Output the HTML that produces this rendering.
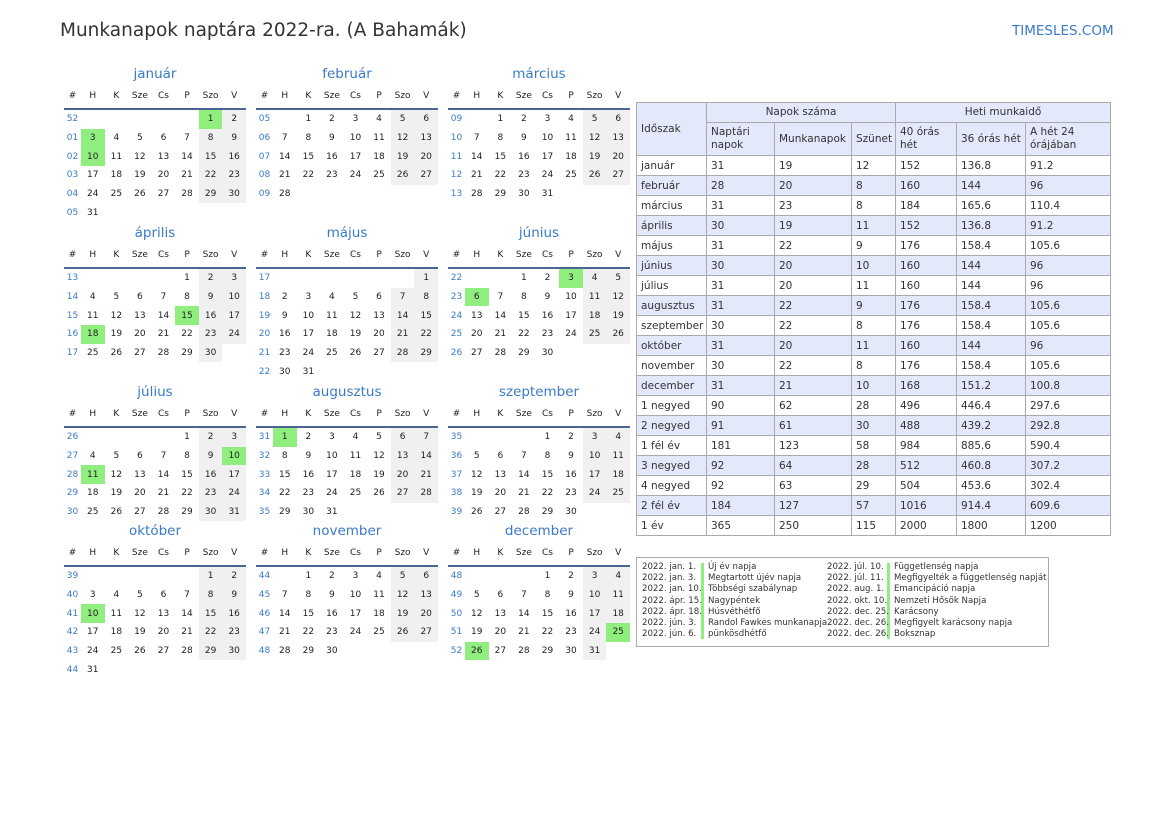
<!DOCTYPE html>
<html><head><meta charset="utf-8"><style>
body{margin:0;width:1169px;height:827px;background:#fff;font-family:"DejaVu Sans","Liberation Sans",sans-serif;position:relative;overflow:hidden;color:#222}
.title{position:absolute;left:60px;top:20px;font-size:18.5px;color:#333}
.site{position:absolute;left:1012px;top:23px;font-size:13.5px;color:#3a7bc8}
.m{position:absolute;width:182px}
.m h3{margin:0;height:20px;line-height:20px;text-align:center;font-weight:normal;font-size:13.5px;color:#3a7bc8}
.m table{border-collapse:collapse;table-layout:fixed;width:182px;font-size:9px}
.m td{height:18.7px;padding:0;text-align:center;vertical-align:middle}
.m tr.h td{height:24px;border-bottom:2.5px solid #4a6592}
.m td:first-child{width:17px;color:#3a7bc8}
.m tr.h td:first-child{color:#222}
.w{background:#f0f0f0}.g{background:#90ee7e}
.s{position:absolute;left:636px;top:102px;width:474px;table-layout:fixed;border-collapse:collapse;font-size:10.5px;color:#333}
.s td{border:1px solid #aaa;height:19px;padding:0 4px;vertical-align:middle;overflow:hidden;white-space:nowrap}
.s tr.a td{background:#e4e8fb}
.s .hd td{background:#e4e8fb;white-space:normal;line-height:13px}
.hol{position:absolute;left:636px;top:557px;width:411px;height:88px;border:1.5px solid #aaa;font-size:8.6px;color:#333}
.hol div{position:absolute;line-height:11.2px;white-space:nowrap}
.bar{position:absolute;width:3px;background:#90ee7e}
</style></head><body>
<div class="title">Munkanapok naptára 2022-ra. (A Bahamák)</div>
<div class="site">TIMESLES.COM</div>

<div class="m" style="left:64px;top:64px"><h3>január</h3><table>
<tr class="h"><td>#</td><td>H</td><td>K</td><td>Sze</td><td>Cs</td><td>P</td><td>Szo</td><td>V</td></tr>
<tr><td>52</td><td></td><td></td><td></td><td></td><td></td><td class="g">1</td><td class="w">2</td></tr>
<tr><td>01</td><td class="g">3</td><td>4</td><td>5</td><td>6</td><td>7</td><td class="w">8</td><td class="w">9</td></tr>
<tr><td>02</td><td class="g">10</td><td>11</td><td>12</td><td>13</td><td>14</td><td class="w">15</td><td class="w">16</td></tr>
<tr><td>03</td><td>17</td><td>18</td><td>19</td><td>20</td><td>21</td><td class="w">22</td><td class="w">23</td></tr>
<tr><td>04</td><td>24</td><td>25</td><td>26</td><td>27</td><td>28</td><td class="w">29</td><td class="w">30</td></tr>
<tr><td>05</td><td>31</td><td></td><td></td><td></td><td></td><td></td><td></td></tr></table></div>

<div class="m" style="left:256px;top:64px"><h3>február</h3><table>
<tr class="h"><td>#</td><td>H</td><td>K</td><td>Sze</td><td>Cs</td><td>P</td><td>Szo</td><td>V</td></tr>
<tr><td>05</td><td></td><td>1</td><td>2</td><td>3</td><td>4</td><td class="w">5</td><td class="w">6</td></tr>
<tr><td>06</td><td>7</td><td>8</td><td>9</td><td>10</td><td>11</td><td class="w">12</td><td class="w">13</td></tr>
<tr><td>07</td><td>14</td><td>15</td><td>16</td><td>17</td><td>18</td><td class="w">19</td><td class="w">20</td></tr>
<tr><td>08</td><td>21</td><td>22</td><td>23</td><td>24</td><td>25</td><td class="w">26</td><td class="w">27</td></tr>
<tr><td>09</td><td>28</td><td></td><td></td><td></td><td></td><td></td><td></td></tr></table></div>

<div class="m" style="left:448px;top:64px"><h3>március</h3><table>
<tr class="h"><td>#</td><td>H</td><td>K</td><td>Sze</td><td>Cs</td><td>P</td><td>Szo</td><td>V</td></tr>
<tr><td>09</td><td></td><td>1</td><td>2</td><td>3</td><td>4</td><td class="w">5</td><td class="w">6</td></tr>
<tr><td>10</td><td>7</td><td>8</td><td>9</td><td>10</td><td>11</td><td class="w">12</td><td class="w">13</td></tr>
<tr><td>11</td><td>14</td><td>15</td><td>16</td><td>17</td><td>18</td><td class="w">19</td><td class="w">20</td></tr>
<tr><td>12</td><td>21</td><td>22</td><td>23</td><td>24</td><td>25</td><td class="w">26</td><td class="w">27</td></tr>
<tr><td>13</td><td>28</td><td>29</td><td>30</td><td>31</td><td></td><td></td><td></td></tr></table></div>

<div class="m" style="left:64px;top:223px"><h3>április</h3><table>
<tr class="h"><td>#</td><td>H</td><td>K</td><td>Sze</td><td>Cs</td><td>P</td><td>Szo</td><td>V</td></tr>
<tr><td>13</td><td></td><td></td><td></td><td></td><td>1</td><td class="w">2</td><td class="w">3</td></tr>
<tr><td>14</td><td>4</td><td>5</td><td>6</td><td>7</td><td>8</td><td class="w">9</td><td class="w">10</td></tr>
<tr><td>15</td><td>11</td><td>12</td><td>13</td><td>14</td><td class="g">15</td><td class="w">16</td><td class="w">17</td></tr>
<tr><td>16</td><td class="g">18</td><td>19</td><td>20</td><td>21</td><td>22</td><td class="w">23</td><td class="w">24</td></tr>
<tr><td>17</td><td>25</td><td>26</td><td>27</td><td>28</td><td>29</td><td class="w">30</td><td></td></tr></table></div>

<div class="m" style="left:256px;top:223px"><h3>május</h3><table>
<tr class="h"><td>#</td><td>H</td><td>K</td><td>Sze</td><td>Cs</td><td>P</td><td>Szo</td><td>V</td></tr>
<tr><td>17</td><td></td><td></td><td></td><td></td><td></td><td></td><td class="w">1</td></tr>
<tr><td>18</td><td>2</td><td>3</td><td>4</td><td>5</td><td>6</td><td class="w">7</td><td class="w">8</td></tr>
<tr><td>19</td><td>9</td><td>10</td><td>11</td><td>12</td><td>13</td><td class="w">14</td><td class="w">15</td></tr>
<tr><td>20</td><td>16</td><td>17</td><td>18</td><td>19</td><td>20</td><td class="w">21</td><td class="w">22</td></tr>
<tr><td>21</td><td>23</td><td>24</td><td>25</td><td>26</td><td>27</td><td class="w">28</td><td class="w">29</td></tr>
<tr><td>22</td><td>30</td><td>31</td><td></td><td></td><td></td><td></td><td></td></tr></table></div>

<div class="m" style="left:448px;top:223px"><h3>június</h3><table>
<tr class="h"><td>#</td><td>H</td><td>K</td><td>Sze</td><td>Cs</td><td>P</td><td>Szo</td><td>V</td></tr>
<tr><td>22</td><td></td><td></td><td>1</td><td>2</td><td class="g">3</td><td class="w">4</td><td class="w">5</td></tr>
<tr><td>23</td><td class="g">6</td><td>7</td><td>8</td><td>9</td><td>10</td><td class="w">11</td><td class="w">12</td></tr>
<tr><td>24</td><td>13</td><td>14</td><td>15</td><td>16</td><td>17</td><td class="w">18</td><td class="w">19</td></tr>
<tr><td>25</td><td>20</td><td>21</td><td>22</td><td>23</td><td>24</td><td class="w">25</td><td class="w">26</td></tr>
<tr><td>26</td><td>27</td><td>28</td><td>29</td><td>30</td><td></td><td></td><td></td></tr></table></div>

<div class="m" style="left:64px;top:382px"><h3>július</h3><table>
<tr class="h"><td>#</td><td>H</td><td>K</td><td>Sze</td><td>Cs</td><td>P</td><td>Szo</td><td>V</td></tr>
<tr><td>26</td><td></td><td></td><td></td><td></td><td>1</td><td class="w">2</td><td class="w">3</td></tr>
<tr><td>27</td><td>4</td><td>5</td><td>6</td><td>7</td><td>8</td><td class="w">9</td><td class="g">10</td></tr>
<tr><td>28</td><td class="g">11</td><td>12</td><td>13</td><td>14</td><td>15</td><td class="w">16</td><td class="w">17</td></tr>
<tr><td>29</td><td>18</td><td>19</td><td>20</td><td>21</td><td>22</td><td class="w">23</td><td class="w">24</td></tr>
<tr><td>30</td><td>25</td><td>26</td><td>27</td><td>28</td><td>29</td><td class="w">30</td><td class="w">31</td></tr></table></div>

<div class="m" style="left:256px;top:382px"><h3>augusztus</h3><table>
<tr class="h"><td>#</td><td>H</td><td>K</td><td>Sze</td><td>Cs</td><td>P</td><td>Szo</td><td>V</td></tr>
<tr><td>31</td><td class="g">1</td><td>2</td><td>3</td><td>4</td><td>5</td><td class="w">6</td><td class="w">7</td></tr>
<tr><td>32</td><td>8</td><td>9</td><td>10</td><td>11</td><td>12</td><td class="w">13</td><td class="w">14</td></tr>
<tr><td>33</td><td>15</td><td>16</td><td>17</td><td>18</td><td>19</td><td class="w">20</td><td class="w">21</td></tr>
<tr><td>34</td><td>22</td><td>23</td><td>24</td><td>25</td><td>26</td><td class="w">27</td><td class="w">28</td></tr>
<tr><td>35</td><td>29</td><td>30</td><td>31</td><td></td><td></td><td></td><td></td></tr></table></div>

<div class="m" style="left:448px;top:382px"><h3>szeptember</h3><table>
<tr class="h"><td>#</td><td>H</td><td>K</td><td>Sze</td><td>Cs</td><td>P</td><td>Szo</td><td>V</td></tr>
<tr><td>35</td><td></td><td></td><td></td><td>1</td><td>2</td><td class="w">3</td><td class="w">4</td></tr>
<tr><td>36</td><td>5</td><td>6</td><td>7</td><td>8</td><td>9</td><td class="w">10</td><td class="w">11</td></tr>
<tr><td>37</td><td>12</td><td>13</td><td>14</td><td>15</td><td>16</td><td class="w">17</td><td class="w">18</td></tr>
<tr><td>38</td><td>19</td><td>20</td><td>21</td><td>22</td><td>23</td><td class="w">24</td><td class="w">25</td></tr>
<tr><td>39</td><td>26</td><td>27</td><td>28</td><td>29</td><td>30</td><td></td><td></td></tr></table></div>

<div class="m" style="left:64px;top:521px"><h3>október</h3><table>
<tr class="h"><td>#</td><td>H</td><td>K</td><td>Sze</td><td>Cs</td><td>P</td><td>Szo</td><td>V</td></tr>
<tr><td>39</td><td></td><td></td><td></td><td></td><td></td><td class="w">1</td><td class="w">2</td></tr>
<tr><td>40</td><td>3</td><td>4</td><td>5</td><td>6</td><td>7</td><td class="w">8</td><td class="w">9</td></tr>
<tr><td>41</td><td class="g">10</td><td>11</td><td>12</td><td>13</td><td>14</td><td class="w">15</td><td class="w">16</td></tr>
<tr><td>42</td><td>17</td><td>18</td><td>19</td><td>20</td><td>21</td><td class="w">22</td><td class="w">23</td></tr>
<tr><td>43</td><td>24</td><td>25</td><td>26</td><td>27</td><td>28</td><td class="w">29</td><td class="w">30</td></tr>
<tr><td>44</td><td>31</td><td></td><td></td><td></td><td></td><td></td><td></td></tr></table></div>

<div class="m" style="left:256px;top:521px"><h3>november</h3><table>
<tr class="h"><td>#</td><td>H</td><td>K</td><td>Sze</td><td>Cs</td><td>P</td><td>Szo</td><td>V</td></tr>
<tr><td>44</td><td></td><td>1</td><td>2</td><td>3</td><td>4</td><td class="w">5</td><td class="w">6</td></tr>
<tr><td>45</td><td>7</td><td>8</td><td>9</td><td>10</td><td>11</td><td class="w">12</td><td class="w">13</td></tr>
<tr><td>46</td><td>14</td><td>15</td><td>16</td><td>17</td><td>18</td><td class="w">19</td><td class="w">20</td></tr>
<tr><td>47</td><td>21</td><td>22</td><td>23</td><td>24</td><td>25</td><td class="w">26</td><td class="w">27</td></tr>
<tr><td>48</td><td>28</td><td>29</td><td>30</td><td></td><td></td><td></td><td></td></tr></table></div>

<div class="m" style="left:448px;top:521px"><h3>december</h3><table>
<tr class="h"><td>#</td><td>H</td><td>K</td><td>Sze</td><td>Cs</td><td>P</td><td>Szo</td><td>V</td></tr>
<tr><td>48</td><td></td><td></td><td></td><td>1</td><td>2</td><td class="w">3</td><td class="w">4</td></tr>
<tr><td>49</td><td>5</td><td>6</td><td>7</td><td>8</td><td>9</td><td class="w">10</td><td class="w">11</td></tr>
<tr><td>50</td><td>12</td><td>13</td><td>14</td><td>15</td><td>16</td><td class="w">17</td><td class="w">18</td></tr>
<tr><td>51</td><td>19</td><td>20</td><td>21</td><td>22</td><td>23</td><td class="w">24</td><td class="g">25</td></tr>
<tr><td>52</td><td class="g">26</td><td>27</td><td>28</td><td>29</td><td>30</td><td class="w">31</td><td></td></tr></table></div>

<table class="s">
<colgroup><col style="width:70px"><col style="width:68px"><col style="width:77px"><col style="width:44px"><col style="width:61px"><col style="width:69px"><col style="width:85px"></colgroup>
<tr class="hd"><td rowspan="2">Időszak</td><td colspan="3" style="text-align:center">Napok száma</td><td colspan="3" style="text-align:center">Heti munkaidő</td></tr>
<tr class="hd" style="height:33px"><td>Naptári<br>napok</td><td>Munkanapok</td><td>Szünet</td><td>40 órás<br>hét</td><td style="white-space:nowrap">36 órás hét</td><td>A hét 24<br>órájában</td></tr>
<tr><td>január</td><td>31</td><td>19</td><td>12</td><td>152</td><td>136.8</td><td>91.2</td></tr>
<tr class="a"><td>február</td><td>28</td><td>20</td><td>8</td><td>160</td><td>144</td><td>96</td></tr>
<tr><td>március</td><td>31</td><td>23</td><td>8</td><td>184</td><td>165.6</td><td>110.4</td></tr>
<tr class="a"><td>április</td><td>30</td><td>19</td><td>11</td><td>152</td><td>136.8</td><td>91.2</td></tr>
<tr><td>május</td><td>31</td><td>22</td><td>9</td><td>176</td><td>158.4</td><td>105.6</td></tr>
<tr class="a"><td>június</td><td>30</td><td>20</td><td>10</td><td>160</td><td>144</td><td>96</td></tr>
<tr><td>július</td><td>31</td><td>20</td><td>11</td><td>160</td><td>144</td><td>96</td></tr>
<tr class="a"><td>augusztus</td><td>31</td><td>22</td><td>9</td><td>176</td><td>158.4</td><td>105.6</td></tr>
<tr><td>szeptember</td><td>30</td><td>22</td><td>8</td><td>176</td><td>158.4</td><td>105.6</td></tr>
<tr class="a"><td>október</td><td>31</td><td>20</td><td>11</td><td>160</td><td>144</td><td>96</td></tr>
<tr><td>november</td><td>30</td><td>22</td><td>8</td><td>176</td><td>158.4</td><td>105.6</td></tr>
<tr class="a"><td>december</td><td>31</td><td>21</td><td>10</td><td>168</td><td>151.2</td><td>100.8</td></tr>
<tr><td>1 negyed</td><td>90</td><td>62</td><td>28</td><td>496</td><td>446.4</td><td>297.6</td></tr>
<tr class="a"><td>2 negyed</td><td>91</td><td>61</td><td>30</td><td>488</td><td>439.2</td><td>292.8</td></tr>
<tr><td>1 fél év</td><td>181</td><td>123</td><td>58</td><td>984</td><td>885.6</td><td>590.4</td></tr>
<tr class="a"><td>3 negyed</td><td>92</td><td>64</td><td>28</td><td>512</td><td>460.8</td><td>307.2</td></tr>
<tr><td>4 negyed</td><td>92</td><td>63</td><td>29</td><td>504</td><td>453.6</td><td>302.4</td></tr>
<tr class="a"><td>2 fél év</td><td>184</td><td>127</td><td>57</td><td>1016</td><td>914.4</td><td>609.6</td></tr>
<tr><td>1 év</td><td>365</td><td>250</td><td>115</td><td>2000</td><td>1800</td><td>1200</td></tr>
</table>

<div class="hol">
<span class="bar" style="left:64px;top:5px;height:76px"></span>
<span class="bar" style="left:250px;top:5px;height:76px"></span>
<div style="left:5px;top:4px">2022. jan. 1.<br>2022. jan. 3.<br>2022. jan. 10.<br>2022. ápr. 15.<br>2022. ápr. 18.<br>2022. jún. 3.<br>2022. jún. 6.</div>
<div style="left:71px;top:4px">Új év napja<br>Megtartott újév napja<br>Többségi szabálynap<br>Nagypéntek<br>Húsvéthétfő<br>Randol Fawkes munkanapja<br>pünkösdhétfő</div>
<div style="left:190px;top:4px">2022. júl. 10.<br>2022. júl. 11.<br>2022. aug. 1.<br>2022. okt. 10.<br>2022. dec. 25.<br>2022. dec. 26.<br>2022. dec. 26.</div>
<div style="left:257px;top:4px">Függetlenség napja<br>Megfigyelték a függetlenség napját<br>Emancipáció napja<br>Nemzeti Hősök Napja<br>Karácsony<br>Megfigyelt karácsony napja<br>Boksznap</div>
</div>
</body></html>
